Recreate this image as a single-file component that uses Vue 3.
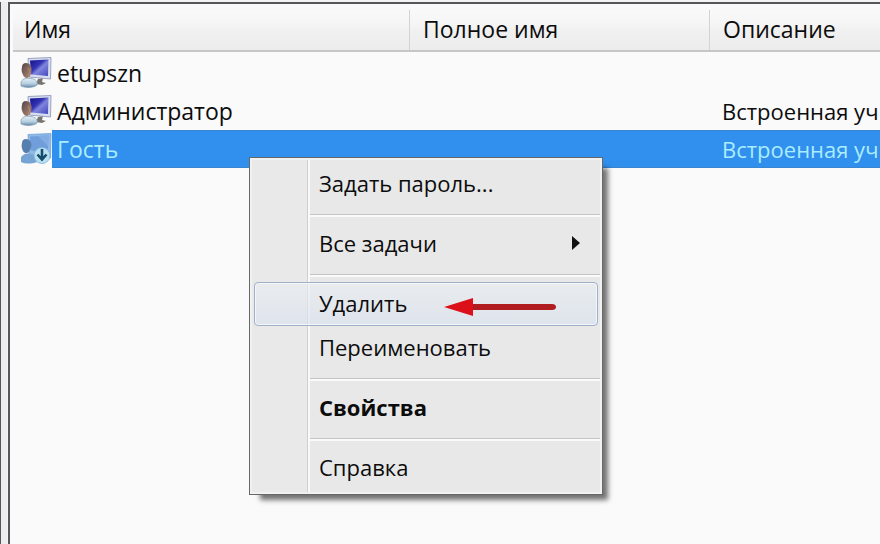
<script setup>
const users = [
  { name: 'etupszn', description: '' },
  { name: 'Администратор', description: 'Встроенная уч' },
  { name: 'Гость', description: 'Встроенная уч', disabled: true, selected: true },
]

const menu = [
  { label: 'Задать пароль...' },
  { separator: true },
  { label: 'Все задачи', submenu: true },
  { separator: true },
  { label: 'Удалить', active: true, pointer: true },
  { label: 'Переименовать' },
  { separator: true },
  { label: 'Свойства', bold: true },
  { separator: true },
  { label: 'Справка' },
]
</script>

<template>
  <div class="window">
    <div class="splitter"></div>
    <main class="pane">
      <table class="list">
        <colgroup>
          <col class="col-name" />
          <col class="col-full" />
          <col />
        </colgroup>
        <thead>
          <tr>
            <th scope="col">Имя</th>
            <th scope="col">Полное имя</th>
            <th scope="col">Описание</th>
          </tr>
        </thead>
        <tbody>
          <tr v-for="user in users" :key="user.name" :class="{ selected: user.selected }">
            <td class="name-cell">
              <div class="name">
                <svg class="icon" viewBox="0 0 32 32" aria-hidden="true">
                  <defs>
                    <linearGradient id="screen" x1="0" y1="0" x2="1" y2="1">
                      <stop offset="0" stop-color="#12128c" />
                      <stop offset="0.4" stop-color="#3434b4" />
                      <stop offset="0.55" stop-color="#7f86dc" />
                      <stop offset="1" stop-color="#4246bd" />
                    </linearGradient>
                    <linearGradient id="head" x1="0" y1="0" x2="1" y2="1">
                      <stop offset="0" stop-color="#4d4548" />
                      <stop offset="0.5" stop-color="#87685f" />
                      <stop offset="1" stop-color="#b18a76" />
                    </linearGradient>
                    <linearGradient id="body" x1="0" y1="0" x2="0" y2="1">
                      <stop offset="0" stop-color="#e3f1f8" />
                      <stop offset="0.6" stop-color="#b5cedf" />
                      <stop offset="1" stop-color="#6388a8" />
                    </linearGradient>
                  </defs>
                  <g v-if="!user.disabled">
                    <path d="M18 22 23 21 22 25 26 26 22 28 16 27Z" fill="#77756f" />
                    <path d="M8 1.500 31 .5 30.500 22 9 20Z" fill="#d8def0" stroke="#8790b4" stroke-width=".8" />
                    <path d="M10 3.500 28.500 2.500 28 19 11 17.500Z" fill="url(#screen)" />
                    <path d="M1 25C3 21 7 21 11 21.500C16 22 18 25 17 28C14 31 5 31 1 29Z" fill="url(#body)" stroke="#7a98b2" stroke-width=".7" />
                    <path d="M2 10C2 6 6 5 9 7C12 9 12 13 11 17C9 22 5 22 3 18C2 16 1 13 2 10Z" fill="url(#head)" />
                    <path d="M8 11C10 13 10 16 8 19" fill="none" stroke="#b18d78" stroke-width="1" />
                  </g>
                  <g v-else>
                    <path d="M8 1.500 31 .5 30.500 25 9 24Z" fill="#8fbae8" stroke="#70a0d5" stroke-width=".8" />
                    <path d="M10 3.500 28.500 2.500 28 19 11 17.500Z" fill="#6f9edb" />
                    <path d="M18 3 28.500 2.500 28 13Z" fill="#82ade2" />
                    <path d="M1 24C4 20 8 20 11 21C16 22 18 25 17 29C12 31 5 31 1 29Z" fill="#75a4d4" />
                    <path d="M2 10C2 6 6 5 9 7C12 9 12 13 10 17C8 21 5 21 3 18C2 16 1 13 2 10Z" fill="#577fae" />
                    <circle cx="22" cy="22.500" r="8" fill="#b9e0f2" stroke="#7db2d8" stroke-width=".8" />
                    <path d="M22 16V26M17.500 21.500 22 26.500 26.500 21.500" fill="none" stroke="#174c68" stroke-width="2.600" />
                  </g>
                </svg>
                <span class="label">{{ user.name }}</span>
              </div>
            </td>
            <td></td>
            <td class="description">{{ user.description }}</td>
          </tr>
        </tbody>
      </table>

      <div class="menu" role="menu">
        <template v-for="(item, index) in menu" :key="index">
          <div v-if="item.separator" class="separator" role="separator"></div>
          <button
            v-else
            type="button"
            role="menuitem"
            class="item"
            :class="{ active: item.active, bold: item.bold }"
          >
            <span>{{ item.label }}</span>
            <svg v-if="item.submenu" class="chevron" viewBox="0 0 8 14" aria-hidden="true">
              <path d="M0 0 8 7 0 14Z" fill="#111" />
            </svg>
            <svg v-if="item.pointer" class="pointer" viewBox="0 0 112 18" aria-hidden="true">
              <path d="M27 6H108Q112 6 112 9T108 12H27Z" fill="#b01c20" />
              <path d="M0 9 29 0V18Z" fill="#dc1018" />
            </svg>
          </button>
        </template>
      </div>
    </main>
  </div>
</template>

<style>
body {
  margin: 0;
  overflow: hidden;
}
</style>

<style scoped>
.window {
  box-sizing: border-box;
  display: flex;
  min-height: 100vh;
  padding-top: 2px;
  background: #f4f4f4;
  color: #0c0c0c;
  font: 23px/38px "Open Sans", "Noto Sans", sans-serif;
  overflow: hidden;
}

.splitter {
  flex: none;
  width: 6px;
  border-left: 1px solid #55555a;
  background: #ededee;
}

.pane {
  position: relative;
  flex: 1;
  min-width: 0;
  margin-left: 1px;
  padding-left: 3px;
  border-top: 2px solid #55575b;
  border-left: 2px solid #55575b;
  background: #fafafa;
}

.list {
  width: 100%;
  table-layout: fixed;
  border-collapse: separate;
  border-spacing: 0;
}

.col-name {
  width: 397px;
}

.col-full {
  width: 300px;
}

th {
  box-sizing: border-box;
  height: 48px;
  padding: 6px 0 2px 13px;
  border-bottom: 2px solid #c5c6c7;
  background:
    linear-gradient(#d2d3d4, #d2d3d4) right bottom / 1px 40px no-repeat,
    linear-gradient(#fafafa 0%, #f6f6f6 40%, #f0f0f1 60%, #ececed 100%);
  font-weight: 400;
  text-align: left;
  white-space: nowrap;
}

th:first-child {
  padding-left: 11px;
}

th:last-child {
  background: linear-gradient(#fafafa 0%, #f6f6f6 40%, #f0f0f1 60%, #ececed 100%);
}

tbody::before {
  content: "";
  display: block;
  height: 2px;
}

td {
  height: 38px;
  padding: 0 0 0 13px;
  white-space: nowrap;
}

.description {
  font-size: 22px;
}

td.description {
  padding-left: 12px;
}

td.name-cell {
  padding-left: 7px;
}

.name {
  display: flex;
  align-items: center;
}

.icon {
  flex: none;
  width: 32px;
  height: 32px;
}

.label {
  flex: 1;
  padding-left: 5px;
}

.selected {
  color: #a9edff;
}

.selected .label,
.selected td:not(.name-cell) {
  background: #318fee;
  box-shadow: inset 0 1px #3a86ce, inset 0 -1px #3a86ce;
}

.menu {
  position: absolute;
  top: 153px;
  left: 239px;
  box-sizing: border-box;
  width: 354px;
  padding: 4px;
  border: 1px solid #66696c;
  background: linear-gradient(90deg, #e9e9e9 57px, #cfcfcf 57px, #cfcfcf 58px, #f9f9f9 58px, #f9f9f9 60px, #e8e8e8 60px);
  box-shadow: inset 0 0 0 2px #f1f1f1, 8px 8px 5px -3px rgb(0 0 0 / 55%);
}

.item {
  box-sizing: border-box;
  display: flex;
  align-items: center;
  width: 100%;
  height: 44px;
  padding: 0 17px 2px 64px;
  border: 1px solid transparent;
  border-radius: 4px;
  background: none;
  color: inherit;
  font: inherit;
  font-size: 22px;
  text-align: left;
  white-space: nowrap;
}

.active {
  border-color: #9fb0c8;
  background: linear-gradient(rgb(234 238 242 / 65%), rgb(217 226 238 / 65%));
  box-shadow: inset 0 0 0 1px rgb(246 249 252 / 80%);
}

.bold {
  font-weight: 700;
}

.chevron {
  width: 8px;
  height: 14px;
  margin-left: auto;
}

.pointer {
  width: 112px;
  height: 18px;
  margin: 8px 24px 0 auto;
}

.separator {
  box-sizing: border-box;
  height: 3px;
  margin: 8px -2px 5px 56px;
  border-top: 1px solid #c4c4c4;
  background: #fafafa;
}
</style>
